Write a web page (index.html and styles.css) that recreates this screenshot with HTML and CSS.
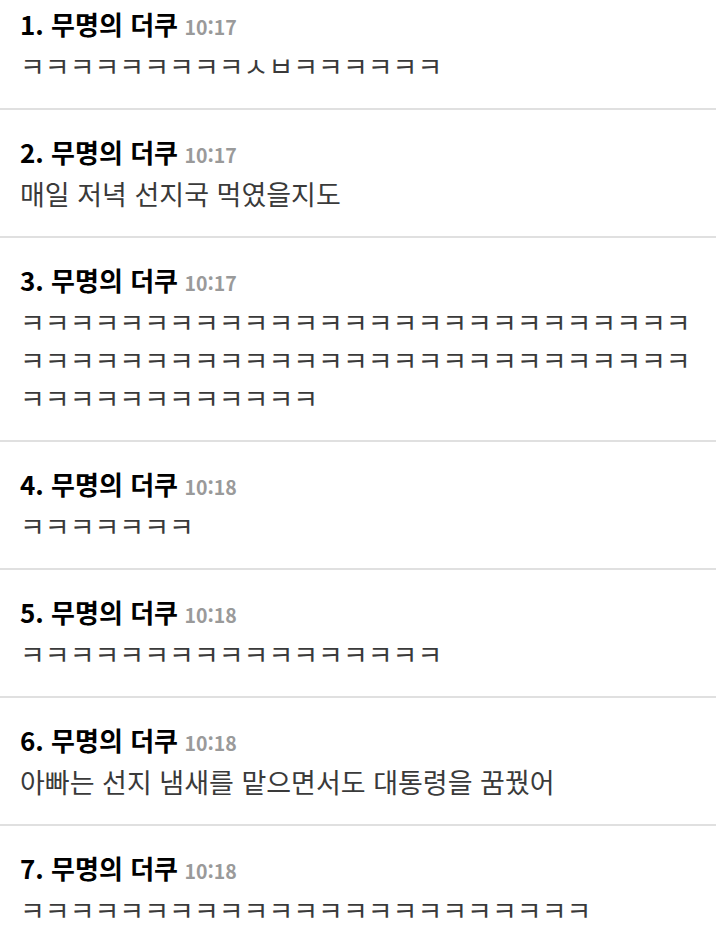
FILE: index.html
```html
<!DOCTYPE html>
<html lang="ko">
<head>
    <meta charset="UTF-8">
    <meta name="viewport" content="width=device-width, initial-scale=1.0">
    <title>댓글</title>
    <link rel="stylesheet" href="styles.css">
</head>
<body>
    <ul class="comment-list">
        <li class="comment">
            <div class="comment-head"><span class="nick">1. 무명의 더쿠</span> <span class="time">10:17</span></div>
            <div class="comment-body">ㅋㅋㅋㅋㅋㅋㅋㅋㅋㅅㅂㅋㅋㅋㅋㅋㅋ</div>
        </li>
        <li class="comment">
            <div class="comment-head"><span class="nick">2. 무명의 더쿠</span> <span class="time">10:17</span></div>
            <div class="comment-body">매일 저녁 선지국 먹였을지도</div>
        </li>
        <li class="comment">
            <div class="comment-head"><span class="nick">3. 무명의 더쿠</span> <span class="time">10:17</span></div>
            <div class="comment-body">ㅋㅋㅋㅋㅋㅋㅋㅋㅋㅋㅋㅋㅋㅋㅋㅋㅋㅋㅋㅋㅋㅋㅋㅋㅋㅋㅋㅋㅋㅋㅋㅋㅋㅋㅋㅋㅋㅋㅋㅋㅋㅋㅋㅋㅋㅋㅋㅋㅋㅋㅋㅋㅋㅋㅋㅋㅋㅋㅋㅋㅋㅋㅋㅋㅋㅋ</div>
        </li>
        <li class="comment">
            <div class="comment-head"><span class="nick">4. 무명의 더쿠</span> <span class="time">10:18</span></div>
            <div class="comment-body">ㅋㅋㅋㅋㅋㅋㅋ</div>
        </li>
        <li class="comment">
            <div class="comment-head"><span class="nick">5. 무명의 더쿠</span> <span class="time">10:18</span></div>
            <div class="comment-body">ㅋㅋㅋㅋㅋㅋㅋㅋㅋㅋㅋㅋㅋㅋㅋㅋㅋ</div>
        </li>
        <li class="comment">
            <div class="comment-head"><span class="nick">6. 무명의 더쿠</span> <span class="time">10:18</span></div>
            <div class="comment-body">아빠는 선지 냄새를 맡으면서도 대통령을 꿈꿨어</div>
        </li>
        <li class="comment">
            <div class="comment-head"><span class="nick">7. 무명의 더쿠</span> <span class="time">10:18</span></div>
            <div class="comment-body">ㅋㅋㅋㅋㅋㅋㅋㅋㅋㅋㅋㅋㅋㅋㅋㅋㅋㅋㅋㅋㅋㅋㅋ</div>
        </li>
    </ul>
</body>
</html>
```

FILE: styles.css
```css
body {
    margin: 0;
    background-color: #fff;
    font-family: "Noto Sans CJK KR", "Noto Sans", sans-serif;
    overflow: hidden;
}
.comment-list {
    list-style: none;
    margin: -20px 0 0 0;
    padding: 0;
}
.comment {
    padding: 24px 20px 23px 20px;
    border-top: 2px solid #e0e0e0;
}
.comment-head {
    line-height: 36px;
    height: 36px;
    white-space: nowrap;
}
.nick {
    font-size: 26px;
    font-weight: bold;
    color: #000;
}
.time {
    margin-left: 2px;
    font-size: 19.5px;
    font-weight: bold;
    color: #9a9a9a;
}
.comment-body {
    margin-top: 5px;
    font-size: 27px;
    line-height: 38px;
    color: #3a3a3a;
    word-break: break-all;
}
```
